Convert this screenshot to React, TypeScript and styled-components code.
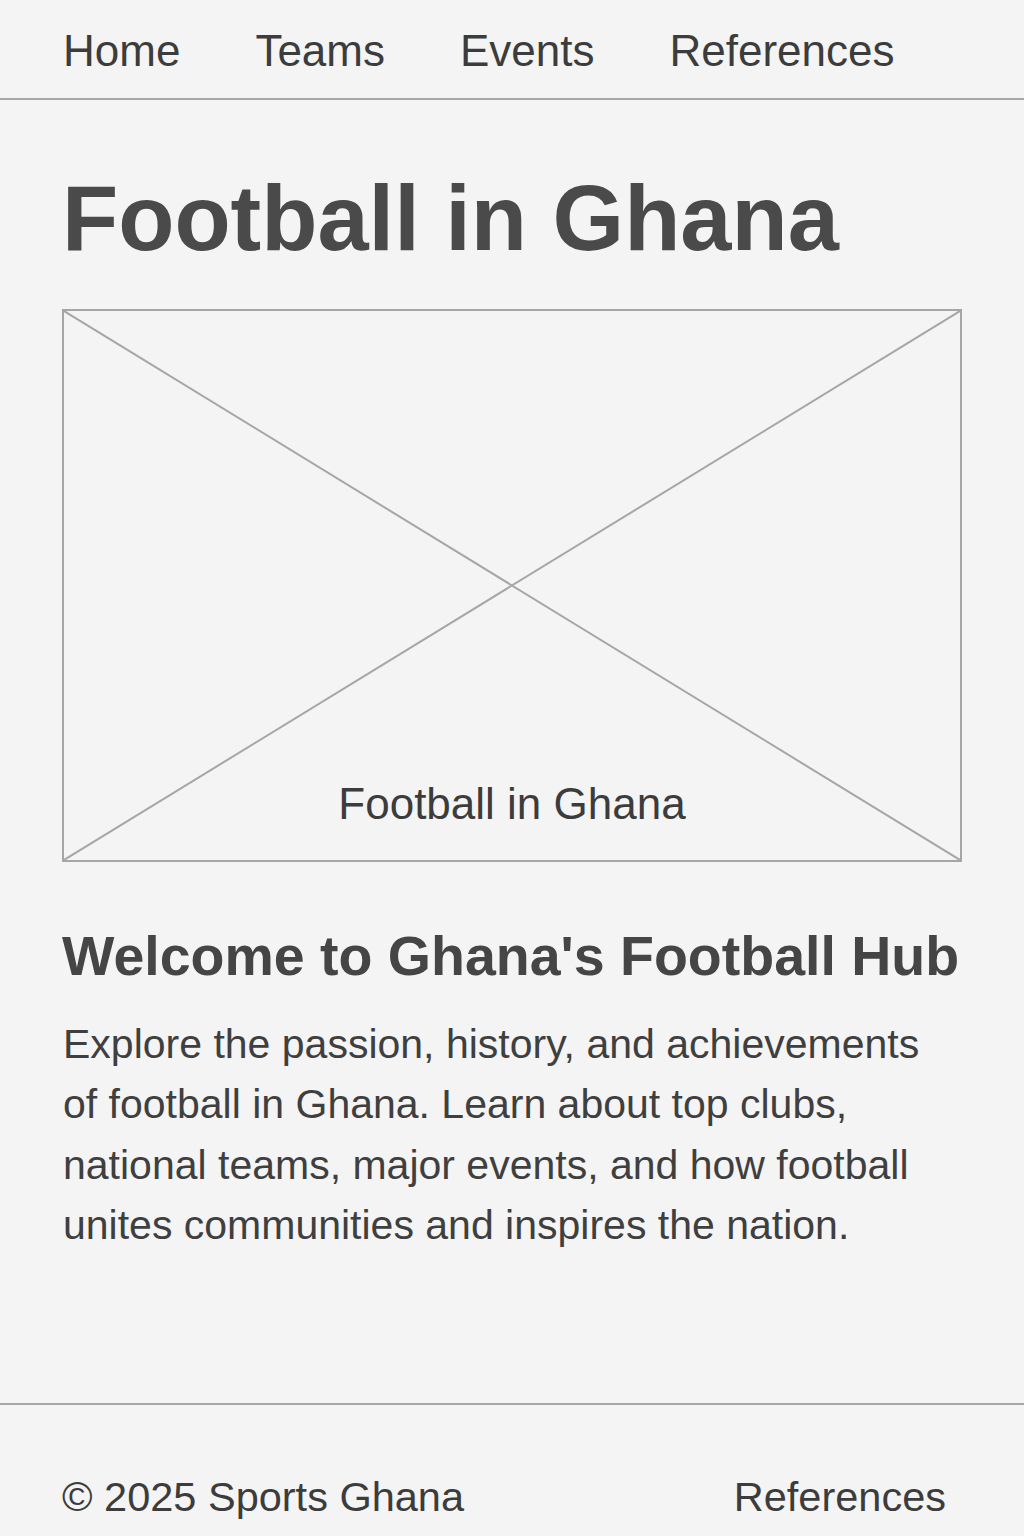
import React from "react";
import styled, { createGlobalStyle } from "styled-components";

const GlobalStyle = createGlobalStyle`
  html, body {
    margin: 0;
    padding: 0;
    background: #f4f4f4;
  }
  body {
    font-family: "Liberation Sans", Arial, sans-serif;
    color: #444;
  }
  * { box-sizing: border-box; }
`;

const Page = styled.div`
  min-height: 100vh;
  display: flex;
  flex-direction: column;
  background: #f4f4f4;
`;

const Nav = styled.nav`
  height: 100px;
  display: flex;
  align-items: center;
  gap: 74px;
  padding: 3px 62px 0 62px;
  border-bottom: 2px solid #a6a6a6;
`;

const NavLink = styled.a`
  font-size: 44px;
  line-height: 1;
  color: #3c3c3c;
  text-decoration: none;
  padding-left: 1px;
`;

const Main = styled.main`
  flex: 1;
  padding: 72px 62px 0 62px;
  display: flex;
  flex-direction: column;
`;

const Title = styled.h1`
  margin: 0;
  font-size: 92px;
  line-height: 1;
  font-weight: 700;
  color: #4a4a4a;
`;

const ImageBox = styled.div`
  position: relative;
  margin-top: 45px;
  width: 100%;
  height: 553px;
  border: 2px solid #a6a6a6;
`;

const Cross = styled.svg`
  display: block;
  width: 100%;
  height: 100%;
`;

const Caption = styled.span`
  position: absolute;
  left: 0;
  right: 0;
  bottom: 34px;
  text-align: center;
  font-size: 44px;
  line-height: 1;
  color: #3c3c3c;
`;

const Heading = styled.h2`
  margin: 67px 0 0 0;
  font-size: 55.5px;
  line-height: 1;
  font-weight: 700;
  color: #454545;
`;

const Text = styled.p`
  margin: 29px 0 0 0;
  max-width: 880px;
  font-size: 41px;
  line-height: 60.5px;
  color: #3f3f3f;
  padding-left: 1px;
`;

const Footer = styled.footer`
  display: flex;
  justify-content: space-between;
  align-items: flex-start;
  border-top: 2px solid #a6a6a6;
  padding: 71px 78px 19px 62px;
`;

const FooterText = styled.span`
  font-size: 41.5px;
  line-height: 1;
  color: #3c3c3c;
`;

const FooterLink = styled.a`
  font-size: 41.5px;
  line-height: 1;
  color: #3c3c3c;
  text-decoration: none;
`;

export default function App() {
  return (
    <Page>
      <GlobalStyle />
      <Nav>
        <NavLink href="#">Home</NavLink>
        <NavLink href="#">Teams</NavLink>
        <NavLink href="#">Events</NavLink>
        <NavLink href="#">References</NavLink>
      </Nav>
      <Main>
        <Title>Football in Ghana</Title>
        <ImageBox>
          <Cross viewBox="0 0 100 100" preserveAspectRatio="none">
            <line x1="0" y1="0" x2="100" y2="100" stroke="#a6a6a6" strokeWidth="2" vectorEffect="non-scaling-stroke" />
            <line x1="100" y1="0" x2="0" y2="100" stroke="#a6a6a6" strokeWidth="2" vectorEffect="non-scaling-stroke" />
          </Cross>
          <Caption>Football in Ghana</Caption>
        </ImageBox>
        <Heading>Welcome to Ghana's Football Hub</Heading>
        <Text>
          Explore the passion, history, and achievements of football in Ghana.
          Learn about top clubs, national teams, major events, and how football
          unites communities and inspires the nation.
        </Text>
      </Main>
      <Footer>
        <FooterText>© 2025 Sports Ghana</FooterText>
        <FooterLink href="#">References</FooterLink>
      </Footer>
    </Page>
  );
}
